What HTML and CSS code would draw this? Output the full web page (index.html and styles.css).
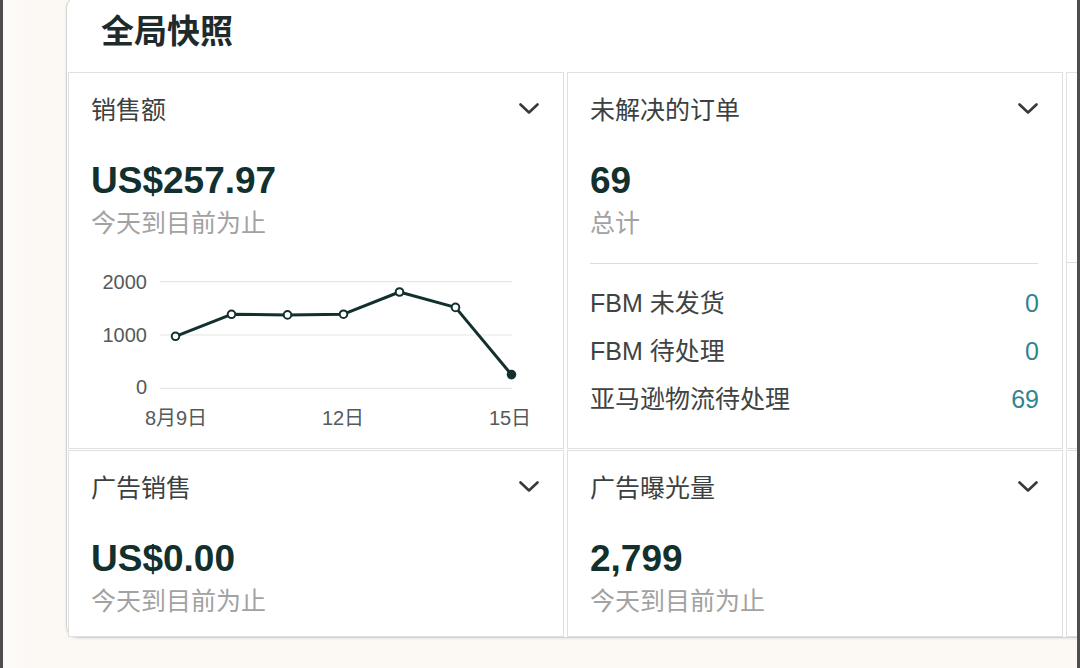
FILE: index.html
```html
<!DOCTYPE html>
<html lang="zh-CN">
<head>
<meta charset="utf-8">
<title>全局快照</title>
<link rel="stylesheet" href="styles.css">
</head>
<body>
<div class="screen">
  <div class="edge"></div>
  <main class="stage">
    <section class="snapshot">
      <header class="snapshot-head">全局快照</header>
      <div class="tiles">
        <article class="tile">
          <div class="tile-head">
            <span class="tile-title">销售额</span>
            <svg class="chev" viewBox="0 0 20 11" width="20" height="11"><polyline points="1.5,1.5 10,9.5 18.5,1.5"/></svg>
          </div>
          <div class="metric">US$257.97</div>
          <div class="caption">今天到目前为止</div>
          <svg class="chart" width="448" height="172" viewBox="0 0 448 172">
            <g class="grid-lines">
              <line x1="69" y1="19.7" x2="421" y2="19.7"/>
              <line x1="69" y1="73" x2="421" y2="73"/>
              <line x1="69" y1="126.3" x2="421" y2="126.3"/>
            </g>
            <g class="axis-y">
              <text x="56" y="26.5">2000</text>
              <text x="56" y="79.8">1000</text>
              <text x="56" y="131.5">0</text>
            </g>
            <g class="axis-x">
              <text x="85" y="163">8月9日</text>
              <text x="252" y="163">12日</text>
              <text x="419" y="163">15日</text>
            </g>
            <polyline class="series" points="84.5,74.3 140.5,52.3 196.5,52.9 252.5,52.2 308.5,30 364.5,45.4 420.5,112.6"/>
            <g class="dots">
              <circle cx="84.5" cy="74.3" r="3.8"/>
              <circle cx="140.5" cy="52.3" r="3.8"/>
              <circle cx="196.5" cy="52.9" r="3.8"/>
              <circle cx="252.5" cy="52.2" r="3.8"/>
              <circle cx="308.5" cy="30" r="3.8"/>
              <circle cx="364.5" cy="45.4" r="3.8"/>
            </g>
            <circle class="dot-now" cx="420.5" cy="112.6" r="4.8"/>
          </svg>
        </article>

        <article class="tile">
          <div class="tile-head">
            <span class="tile-title">未解决的订单</span>
            <svg class="chev" viewBox="0 0 20 11" width="20" height="11"><polyline points="1.5,1.5 10,9.5 18.5,1.5"/></svg>
          </div>
          <div class="metric">69</div>
          <div class="caption">总计</div>
          <ul class="breakdown">
            <li><span>FBM 未发货</span><span class="count">0</span></li>
            <li><span>FBM 待处理</span><span class="count">0</span></li>
            <li><span>亚马逊物流待处理</span><span class="count">69</span></li>
          </ul>
        </article>

        <article class="tile tile-cut">
          <div class="stub"></div>
        </article>

        <article class="tile">
          <div class="tile-head">
            <span class="tile-title">广告销售</span>
            <svg class="chev" viewBox="0 0 20 11" width="20" height="11"><polyline points="1.5,1.5 10,9.5 18.5,1.5"/></svg>
          </div>
          <div class="metric">US$0.00</div>
          <div class="caption">今天到目前为止</div>
        </article>

        <article class="tile">
          <div class="tile-head">
            <span class="tile-title">广告曝光量</span>
            <svg class="chev" viewBox="0 0 20 11" width="20" height="11"><polyline points="1.5,1.5 10,9.5 18.5,1.5"/></svg>
          </div>
          <div class="metric">2,799</div>
          <div class="caption">今天到目前为止</div>
        </article>

        <article class="tile tile-cut"></article>
      </div>
    </section>
  </main>
  <div class="edge"></div>
</div>
</body>
</html>
```

FILE: styles.css
```css
* {
  box-sizing: border-box;
}

html, body {
  margin: 0;
  padding: 0;
}

body {
  font-family: "Liberation Sans", "Noto Sans CJK SC", sans-serif;
  background: #fcf8f3;
  color: #3a3f3f;
}

.screen {
  display: flex;
  width: 1080px;
  height: 668px;
  overflow: hidden;
  background: linear-gradient(90deg, #fdfbf9 0px, #fcf8f3 40px);
}

.edge {
  flex: none;
  width: 3px;
  background: #4e4e4e;
}

.stage {
  flex: 1;
  min-width: 0;
  overflow: hidden;
  padding-left: 63px;
}

.snapshot {
  width: max-content;
  margin-top: -4px;
  background: #ffffff;
  border: 1px solid #d2d2d2;
  border-radius: 12px;
  box-shadow: 0 1px 3px rgba(0, 0, 0, 0.08);
}

.snapshot-head {
  height: 75px;
  padding: 15px 0 0 34px;
  font-size: 33px;
  line-height: 40px;
  font-weight: bold;
  color: #1f2b2b;
}

.tiles {
  display: grid;
  grid-template-columns: repeat(3, 496px);
  grid-template-rows: 377px 187px;
  column-gap: 3px;
  row-gap: 1px;
  padding-left: 1px;
}

.tile {
  border: 1px solid #e0e0e0;
  padding: 21px 24px 0 22px;
  background: #fff;
}

.tile-head {
  display: flex;
  align-items: center;
  justify-content: space-between;
  height: 32px;
}

.tile-title {
  font-size: 25px;
  line-height: 32px;
  color: #3b4141;
}

.chev {
  display: block;
  margin-top: -4px;
}

.chev polyline {
  fill: none;
  stroke: #363a3a;
  stroke-width: 2.6;
  stroke-linecap: round;
  stroke-linejoin: round;
}

.metric {
  margin-top: 33px;
  font-size: 37px;
  line-height: 44px;
  font-weight: bold;
  color: #12302d;
}

.caption {
  margin-top: 5px;
  font-size: 25px;
  line-height: 30px;
  color: #a2a2a2;
}

.chart {
  display: block;
  margin-top: 24px;
  overflow: visible;
}

.grid-lines line {
  stroke: #e6e6e6;
  stroke-width: 1.2;
}

.axis-y text,
.axis-x text {
  font-family: "Liberation Sans", "Noto Sans CJK SC", sans-serif;
  font-size: 20px;
  fill: #555a5a;
}

.axis-y text {
  text-anchor: end;
}

.axis-x text {
  text-anchor: middle;
}

.series {
  fill: none;
  stroke: #12302d;
  stroke-width: 3;
  stroke-linejoin: round;
  stroke-linecap: round;
}

.dots circle {
  fill: #ffffff;
  stroke: #12302d;
  stroke-width: 2;
}

.dot-now {
  fill: #12302d;
}

.breakdown {
  list-style: none;
  margin: 25px 0 0;
  padding: 15px 0 0;
  border-top: 1px solid #dcdcdc;
}

.breakdown li {
  display: flex;
  justify-content: space-between;
  font-size: 25px;
  line-height: 48px;
  color: #3f4343;
}

.breakdown .count {
  color: #2f8591;
  margin-right: -1px;
}

.tile-cut {
  padding: 0;
}

.stub {
  height: 190px;
  border-bottom: 1px solid #dcdcdc;
}
```
